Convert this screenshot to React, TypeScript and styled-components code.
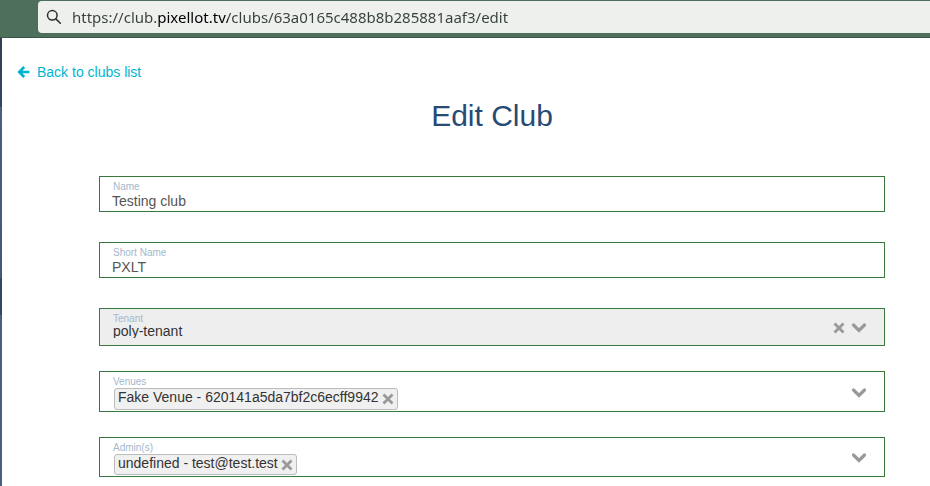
import React, { useState } from "react";
import styled, { createGlobalStyle } from "styled-components";

const GlobalStyle = createGlobalStyle`
  *, *::before, *::after { box-sizing: border-box; }
  body {
    margin: 0;
    background: #fff;
    font-family: "Liberation Sans", Arial, sans-serif;
    font-size: 14px;
    line-height: 16px;
    color: #333;
  }
  input, select, button { font: inherit; color: inherit; }
`;

const Page = styled.div`
  display: flex;
  flex-direction: column;
  min-height: 100vh;
`;

const BrowserBar = styled.header`
  display: flex;
  padding: 1px 0 4px 38px;
  background: #4f6f5d;
  border-bottom: 1px solid #3d5549;
`;

const AddressBox = styled.label`
  flex: 1;
  display: flex;
  align-items: center;
  gap: 10px;
  height: 32px;
  padding-left: 8px;
  background: #eef0ee;
  border-radius: 4px 0 0 4px;
`;

const AddressInput = styled.input`
  flex: 1;
  min-width: 0;
  height: 24px;
  padding: 0;
  border: 0;
  outline: 0;
  font-family: "Noto Sans", sans-serif;
  font-size: 15px;
  line-height: 24px;
  color: transparent;
  caret-color: #2e3436;
  background: linear-gradient(90deg, #36403b 86px, #000 86px, #000 156px, #36403b 156px);
  background-clip: text;
  -webkit-background-clip: text;
`;

const Body = styled.div`
  flex: 1;
  display: flex;
`;

const SideStrip = styled.aside`
  width: 2px;
  background: linear-gradient(
    #2f3f55 0, #34465f 69px, #48607d 69px, #435a77 240px,
    #34475f 240px, #34475f 277px, #48607d 277px
  );
`;

const Main = styled.main`
  flex: 1;
  padding-top: 26px;
`;

const BackLink = styled.a`
  display: inline-flex;
  align-items: center;
  gap: 7px;
  margin-left: 15px;
  color: #00b4cf;
  text-decoration: none;
`;

const Form = styled.form`
  display: flex;
  flex-direction: column;
  padding: 17px 45px 9px 97px;
`;

const Title = styled.h1`
  margin: 0 0 42px;
  font-size: 30px;
  line-height: 36px;
  font-weight: 400;
  text-align: center;
  color: #284a74;
`;

const Field = styled.div<{ $height: number; $gap?: number; $disabled?: boolean }>`
  display: flex;
  align-items: center;
  height: ${(p) => p.$height}px;
  margin-bottom: ${(p) => p.$gap ?? 0}px;
  padding: 0 17px 0 12px;
  border: 1px solid #3a783d;
  background: ${(p) => (p.$disabled ? "#eee" : "#fff")};
`;

const FieldContent = styled.div`
  flex: 1;
  align-self: stretch;
  display: flex;
  flex-direction: column;
  min-width: 0;
  padding-top: 5px;
`;

const Label = styled.label`
  padding-left: 1px;
  font-size: 10px;
  line-height: 10px;
  color: #a3b8cc;
`;

const TextInput = styled.input`
  width: 100%;
  height: 18px;
  padding: 0;
  border: 0;
  outline: 0;
  background: transparent;
  color: #555;
`;

const Select = styled.select`
  width: 100%;
  height: 14px;
  padding: 0 0 0 1px;
  border: 0;
  outline: 0;
  appearance: none;
  line-height: 14px;
  background: transparent;
  color: #333;
`;

const Tags = styled.div`
  display: flex;
  padding: 1px 0 0 2px;
`;

const Tag = styled.span<{ $height: number }>`
  display: flex;
  align-items: flex-start;
  gap: 3px;
  height: ${(p) => p.$height}px;
  padding: 0 3px;
  border: 1px solid #bcbcbc;
  border-radius: 3px;
  background: #f0f0f0;
  white-space: nowrap;
`;

const TagInput = styled.input`
  flex: 1;
  min-width: 0;
  height: 20px;
  padding: 0 4px;
  border: 0;
  outline: 0;
  background: transparent;
`;

const IconButton = styled.button`
  display: flex;
  padding: 0;
  border: 0;
  background: transparent;
  color: #999;
  cursor: pointer;
`;

const TagRemove = styled(IconButton)`
  padding-top: 4px;
`;

const Indicators = styled.div`
  display: flex;
  align-items: center;
  gap: 6px;
  padding-top: 2px;
`;

const SearchIcon = () => (
  <svg width="16" height="16" viewBox="0 0 16 16" fill="none" stroke="#2b302d" strokeWidth="1.5" strokeLinecap="round" aria-hidden="true">
    <circle cx="6.3" cy="6.3" r="4.8" />
    <path d="M9.9 9.9 14.3 14.3" />
  </svg>
);

const ArrowLeftIcon = () => (
  <svg width="13" height="12" viewBox="0 0 13 12" fill="none" stroke="currentColor" strokeWidth="2.6" aria-hidden="true">
    <path d="M7.2 1 2.2 6l5 5M2.4 6H12.4" />
  </svg>
);

const CrossIcon = () => (
  <svg width="12" height="12" viewBox="0 0 12 12" fill="none" stroke="currentColor" strokeWidth="2.8" aria-hidden="true">
    <path d="m1.5 1.5 9 9m0-9-9 9" />
  </svg>
);

const ChevronIcon = () => (
  <svg width="16" height="12" viewBox="0 0 16 12" fill="none" stroke="currentColor" strokeWidth="3.2" strokeLinecap="round" aria-hidden="true">
    <path d="m2.5 3 5.5 5.5L13.5 3" />
  </svg>
);

type TextFieldProps = { id: string; label: string; value: string };

const TextField = ({ id, label, value }: TextFieldProps) => (
  <Field $height={36} $gap={30}>
    <FieldContent>
      <Label htmlFor={id}>{label}</Label>
      <TextInput id={id} type="text" defaultValue={value} />
    </FieldContent>
  </Field>
);

type TagFieldProps = { id: string; label: string; value: string; height: number; gap?: number };

const TagField = ({ id, label, value, height, gap }: TagFieldProps) => {
  const [tags, setTags] = useState([value]);
  return (
    <Field $height={height} $gap={gap}>
      <FieldContent>
        <Label htmlFor={id}>{label}</Label>
        <Tags>
          {tags.map((tag) => (
            <Tag key={tag} $height={height - 19}>
              {tag}
              <TagRemove type="button" aria-label={`Remove ${tag}`} onClick={() => setTags(tags.filter((t) => t !== tag))}>
                <CrossIcon />
              </TagRemove>
            </Tag>
          ))}
          <TagInput id={id} type="text" role="combobox" aria-expanded="false" />
        </Tags>
      </FieldContent>
      <Indicators>
        <IconButton type="button" aria-label={`Open ${label}`}>
          <ChevronIcon />
        </IconButton>
      </Indicators>
    </Field>
  );
};

export default function App() {
  const [tenant, setTenant] = useState("poly-tenant");
  return (
    <>
      <GlobalStyle />
      <Page>
        <BrowserBar>
          <AddressBox>
            <SearchIcon />
            <AddressInput
              type="text"
              aria-label="Address"
              spellCheck={false}
              defaultValue="https://club.pixellot.tv/clubs/63a0165c488b8b285881aaf3/edit"
            />
          </AddressBox>
        </BrowserBar>
        <Body>
          <SideStrip />
          <Main>
            <BackLink href="#clubs">
              <ArrowLeftIcon />
              Back to clubs list
            </BackLink>
            <Form>
              <Title>Edit Club</Title>
              <TextField id="name" label="Name" value="Testing club" />
              <TextField id="short-name" label="Short Name" value="PXLT" />
              <Field $height={38} $gap={25} $disabled>
                <FieldContent>
                  <Label htmlFor="tenant">Tenant</Label>
                  <Select id="tenant" value={tenant} onChange={(e) => setTenant(e.target.value)}>
                    <option value="" />
                    <option value="poly-tenant">poly-tenant</option>
                  </Select>
                </FieldContent>
                <Indicators>
                  <IconButton type="button" aria-label="Clear tenant" onClick={() => setTenant("")}>
                    <CrossIcon />
                  </IconButton>
                  <IconButton type="button" aria-label="Open Tenant">
                    <ChevronIcon />
                  </IconButton>
                </Indicators>
              </Field>
              <TagField id="venues" label="Venues" value="Fake Venue - 620141a5da7bf2c6ecff9942" height={41} gap={25} />
              <TagField id="admins" label="Admin(s)" value="undefined - test@test.test" height={40} />
            </Form>
          </Main>
        </Body>
      </Page>
    </>
  );
}
